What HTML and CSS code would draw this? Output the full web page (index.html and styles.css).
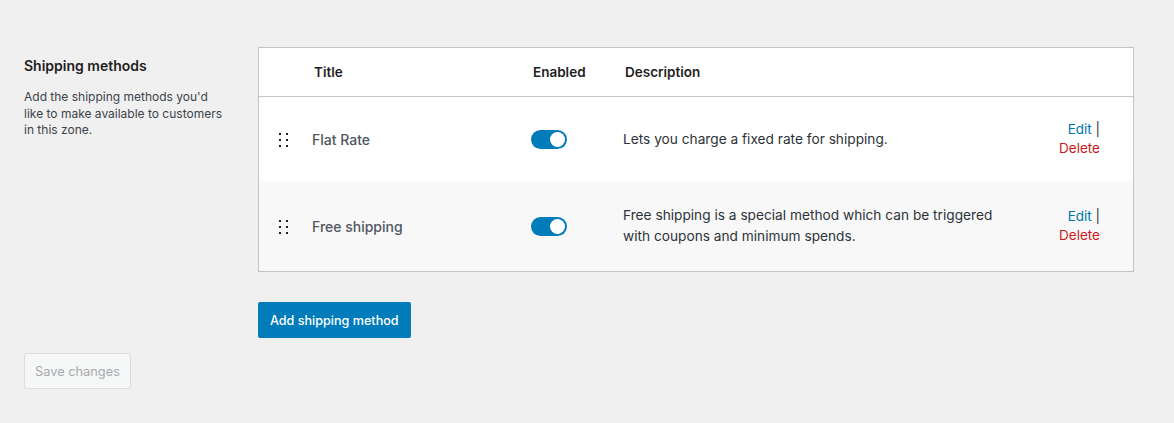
FILE: index.html
```html
<!DOCTYPE html>
<html lang="en">
<head>
<meta charset="utf-8">
<title>Shipping methods</title>
<link rel="stylesheet" href="styles.css">
</head>
<body>
<div class="page">
  <div class="section">
    <div class="aside">
      <h2 class="aside-title">Shipping methods</h2>
      <p class="aside-desc">Add the shipping methods you'd like to make available to customers in this zone.</p>
    </div>
    <div class="main">
      <div class="methods">
        <div class="row head">
          <div class="cell"></div>
          <div class="cell">Title</div>
          <div class="cell">Enabled</div>
          <div class="cell">Description</div>
          <div class="cell"></div>
        </div>
        <div class="row">
          <div class="cell handle-cell"><span class="handle"><i></i><i></i><i></i><i></i><i></i><i></i></span></div>
          <div class="cell title">Flat Rate</div>
          <div class="cell"><span class="toggle"><span class="knob"></span></span></div>
          <div class="cell desc">Lets you charge a fixed rate for shipping.</div>
          <div class="cell actions"><span class="action-line"><a class="edit" href="#">Edit</a> |</span><span class="action-line"><a class="delete" href="#">Delete</a></span></div>
        </div>
        <div class="row alt">
          <div class="cell handle-cell"><span class="handle"><i></i><i></i><i></i><i></i><i></i><i></i></span></div>
          <div class="cell title">Free shipping</div>
          <div class="cell"><span class="toggle"><span class="knob"></span></span></div>
          <div class="cell desc">Free shipping is a special method which can be triggered with coupons and minimum spends.</div>
          <div class="cell actions"><span class="action-line"><a class="edit" href="#">Edit</a> |</span><span class="action-line"><a class="delete" href="#">Delete</a></span></div>
        </div>
      </div>
      <button class="btn-primary" type="button">Add shipping method</button>
    </div>
  </div>
  <button class="btn-save" type="button" disabled>Save changes</button>
</div>
</body>
</html>
```

FILE: styles.css
```css
html, body {
  margin: 0;
  background: #f0f0f0;
}
body {
  font-family: Inter, "Noto Sans", "Liberation Sans", sans-serif;
  color: #1e1e1e;
  font-size: 13px;
}
.page {
  padding: 47px 40px 0 24px;
}
.section {
  display: flex;
}
.aside {
  width: 234px;
  flex: none;
}
.aside-title {
  margin: 9px 0 0;
  font-size: 14px;
  font-weight: 600;
  line-height: 20px;
  color: #1e1e1e;
}
.aside-desc {
  margin: 13px 0 0;
  width: 205px;
  font-size: 12px;
  line-height: 16.5px;
  color: #3c434a;
}
.main {
  flex: 1;
}
.methods {
  background: #fff;
  border: 1px solid #c3c4c7;
}
.row {
  display: grid;
  grid-template-columns: 53px 219px 92px 1fr 110px;
  align-items: center;
  min-height: 84px;
}
.row.head {
  min-height: 48px;
  border-bottom: 1px solid #c3c4c7;
  font-weight: 600;
  font-size: 13.5px;
  color: #1e1e1e;
}
.row.head .cell:nth-child(2),
.row.head .cell:nth-child(3),
.row.head .cell:nth-child(4) {
  padding-left: 2px;
}
.row.alt {
  background: #f8f8f8;
  min-height: 90px;
}
.handle-cell {
  padding-left: 20px;
}
.handle {
  display: grid;
  grid-template-columns: 2px 2px;
  column-gap: 5px;
  row-gap: 4px;
  width: 9px;
  padding-top: 1px;
}
.handle i {
  display: block;
  width: 2px;
  height: 2px;
  background: #1e1e1e;
}
.title {
  font-size: 14px;
  font-weight: 500;
  color: #50575e;
}
.toggle {
  display: flex;
  justify-content: flex-end;
  align-items: center;
  width: 36px;
  height: 19px;
  border-radius: 10px;
  background: #007cba;
  padding: 0 2px;
  box-sizing: border-box;
}
.knob {
  display: block;
  width: 15px;
  height: 15px;
  border-radius: 50%;
  background: #fff;
}
.desc {
  font-size: 13.7px;
  line-height: 21px;
  color: #2c3338;
  padding-right: 14px;
}
.actions {
  text-align: right;
  padding-right: 33px;
  font-size: 13.5px;
  line-height: 19px;
  color: #2c3338;
}
.action-line {
  display: block;
}
.actions a {
  text-decoration: none;
}
.edit {
  color: #0073aa;
}
.delete {
  color: #cc1818;
}
.btn-primary {
  margin-top: 30px;
  height: 36px;
  padding: 0 12px;
  border: 0;
  border-radius: 2px;
  background: #007cba;
  color: #fff;
  font-family: inherit;
  font-size: 12.6px;
  font-weight: 500;
}
.btn-save {
  display: block;
  margin-top: 15px;
  height: 36px;
  padding: 0 10px;
  border: 1px solid #dcdcde;
  border-radius: 3px;
  background: #f6f7f7;
  color: #a7aaad;
  font-family: inherit;
  font-size: 12.8px;
}
```
